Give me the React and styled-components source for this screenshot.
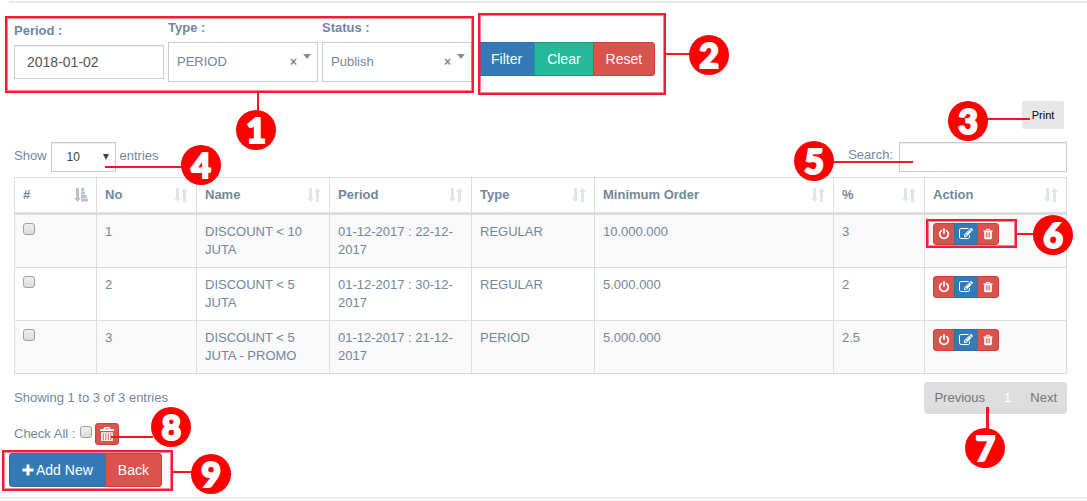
import React from "react";
import styled, { createGlobalStyle, css } from "styled-components";

const GlobalStyle = createGlobalStyle`
  *, *::before, *::after { box-sizing: border-box; }
  body {
    margin: 0;
    background: #f7f7f7;
    color: #73879c;
    font: 13px/18px "Liberation Sans", Arial, sans-serif;
  }
  button, input, select { font-family: inherit; margin: 0; }
`;

const palette = {
  blue: ["#337ab7", "#2e6da4"],
  green: ["#26b99a", "#169f85"],
  red: ["#d9534f", "#d43f3a"],
};

/* Page */
const Panel = styled.main`
  background: #fff;
  border-bottom: 1px solid #e4e4e4;
  padding: 1px 20px 10px 14px;
`;
const Rule = styled.hr`
  height: 2px;
  margin: 0 -20px 16px -5px;
  border: 0;
  background: #e6e9ed;
`;
const Bar = styled.div`
  display: flex;
  align-items: ${(p) => p.$align || "center"};
  justify-content: ${(p) => p.$justify || "flex-start"};
  gap: ${(p) => p.$gap || 0}px;
  margin-top: ${(p) => p.$top || 0}px;
`;
const Anchor = styled.div`
  position: relative;
  display: flex;
  align-items: center;
`;
const PrintBar = styled(Bar)`
  padding-right: 3px;
`;

/* Numbered callouts drawn over the page */
const over = css`
  position: absolute;
  z-index: 2;
  pointer-events: none;
  left: ${(p) => p.$x}px;
  top: ${(p) => p.$y}px;
`;
const Frame = styled.span`
  ${over}
  z-index: 1;
  width: ${(p) => p.$w}px;
  height: ${(p) => p.$h}px;
  border: 2px solid #f81838;
  box-shadow: inset 0 0 0 1px #f8183888;
`;
const Lead = styled.span`
  ${over}
  width: ${(p) => p.$w || 2}px;
  height: ${(p) => p.$h || 2}px;
  background: #fb1420;
`;
const Badge = styled.span`
  ${over}
  display: flex;
  align-items: center;
  justify-content: center;
  width: 40px;
  height: 40px;
  border-radius: 50%;
  background: #f00;
  color: #fff;
  font: 900 34px/40px Lato, "Liberation Sans", sans-serif;
  -webkit-text-stroke: 2px #fff;
`;

/* Filters */
const Filters = styled(Anchor)`
  gap: 4px;
`;
const Field = styled.div`
  display: flex;
  flex-direction: column;
  gap: 5px;
  width: 150px;
`;
const FieldLabel = styled.label`
  font-weight: 700;
`;
const TextInput = styled.input`
  width: 100%;
  height: 34px;
  padding: 6px 12px;
  border: 1px solid #ccc;
  border-radius: 0;
  background: #fff;
  box-shadow: inset 0 1px 1px rgba(0, 0, 0, 0.075);
  color: #555;
  font-size: 14px;
`;
const Picker = styled.div`
  position: relative;
`;
const PickerSelect = styled.select`
  appearance: none;
  width: 100%;
  height: 40px;
  padding: 0 40px 2px 8px;
  border: 1px solid #ccc;
  border-radius: 0;
  background: #fff;
  color: #73879c;
  font-size: 13px;
`;
const ClearPick = styled.button`
  position: absolute;
  right: 21px;
  top: 11px;
  padding: 0;
  border: 0;
  background: none;
  color: #73879c;
  font-size: 12px;
  font-weight: 700;
  line-height: 18px;
`;
const PickerCaret = styled.span`
  position: absolute;
  right: 7px;
  top: 12px;
  border: 4px solid transparent;
  border-top: 5px solid #888;
  border-bottom: 0;
  pointer-events: none;
`;

/* Buttons */
const ButtonGroup = styled(Anchor)`
  margin-top: ${(p) => p.$top || 0}px;
  margin-left: ${(p) => p.$left || 0}px;
  > button { border-radius: 0; }
  > button:first-of-type { border-radius: 3px 0 0 3px; }
  > button:last-of-type { border-radius: 0 3px 3px 0; }
  > button + button { margin-left: -1px; }
`;
const Button = styled.button`
  display: inline-flex;
  align-items: center;
  gap: 2px;
  height: 34px;
  padding: 0 12px;
  border: 1px solid ${(p) => palette[p.$tone][1]};
  border-radius: 3px;
  background: ${(p) => palette[p.$tone][0]};
  color: #fff;
  font-size: 14px;
  white-space: nowrap;
`;
const SmallButton = styled(Button)`
  justify-content: center;
  height: 22px;
  padding: 0 4px;
  min-width: 22px;
`;
const PrintButton = styled.button`
  width: 42px;
  height: 28px;
  padding: 0;
  border: 0;
  border-radius: 2px;
  background: #e7e7e7;
  color: #000;
  font-size: 11px;
`;

/* Table tools */
const LengthLabel = styled.label`
  display: flex;
  align-items: center;
  gap: 4px;
  height: 30px;
  padding-bottom: 2px;
`;
const LengthPicker = styled.span`
  position: relative;
  display: flex;
  height: 30px;
  margin-bottom: -2px;
`;
const LengthSelect = styled.select`
  appearance: none;
  width: 65px;
  height: 30px;
  padding: 0 15px;
  border: 1px solid #ccc;
  border-radius: 0;
  background: #fff;
  box-shadow: inset 0 1px 1px rgba(0, 0, 0, 0.075);
  color: #444;
  font-size: 12px;
`;
const LengthCaret = styled.span`
  position: absolute;
  right: 7px;
  top: 12px;
  border: 3px solid transparent;
  border-top: 6px solid #444;
  border-bottom: 0;
  pointer-events: none;
`;
const SearchLabel = styled.label`
  padding: 0 6px 4px 0;
`;
const SearchInput = styled(TextInput)`
  width: 168px;
  height: 30px;
  padding: 5px 10px;
`;

/* Table */
const Table = styled.table`
  width: 100%;
  margin-top: 5px;
  table-layout: fixed;
  border: solid #ddd;
  border-width: 1px 0 0 1px;
  border-collapse: separate;
  border-spacing: 0;
`;
const Col = styled.col`
  width: ${(p) => (p.$w ? `${p.$w}px` : "auto")};
`;
const Th = styled.th`
  padding: 8px;
  border: solid #ddd;
  border-width: 0 1px 3px 0;
  text-align: left;
`;
const HeadCell = styled.span`
  display: flex;
  align-items: center;
  justify-content: space-between;
  white-space: nowrap;
  color: ${(p) => (p.$active ? "#b9c3ce" : "#e1e5ea")};
`;
const HeadText = styled.span`
  color: #73879c;
`;
const Row = styled.tr`
  background: #fff;
  &:nth-child(odd) { background: #f9f9f9; }
`;
const Td = styled.td`
  padding: 8px;
  border: solid #ddd;
  border-width: 0 1px 1px 0;
  vertical-align: top;
`;
const RowActions = styled(ButtonGroup)`
  width: max-content;
`;
const Check = styled.input`
  appearance: none;
  display: block;
  width: 12px;
  height: 12px;
  border: 1px solid #a0a0a0;
  border-radius: 3px;
  background: linear-gradient(#efefef, #dcdcdc);
  &:checked { background: #337ab7; }
`;

/* Pagination and bulk actions */
const Info = styled.p`
  margin: 0;
`;
const Pages = styled.nav`
  position: relative;
  display: flex;
  align-items: center;
  gap: 19px;
  height: 32px;
  padding: 0 10px;
  border-radius: 4px;
  background: #ddd;
`;
const PageLink = styled.a`
  color: ${(p) => (p.$current ? "#fff" : "#777")};
  text-decoration: none;
`;
const BulkLabel = styled.label`
  display: flex;
  align-items: center;
  gap: 5px;
`;
const BulkCheck = styled(Check)`
  margin-bottom: 4px;
`;

/* Icons */
const Icon = ({ size = 12, box = 1792, d }) => (
  <svg width={size} height={size} viewBox={`0 0 ${box} ${box}`} fill="currentColor" aria-hidden="true">
    <path d={d} fillRule="evenodd" />
  </svg>
);
const paths = {
  power:
    "M1664 896q0 156-61 298t-164 245-245 164-298 61-298-61-245-164-164-245-61-298q0-182 80.5-343t226.5-270q43-32 95.5-25t83.5 50q32 42 24.5 94.5t-49.5 84.5q-98 74-151.5 181t-53.5 228q0 104 40.5 198.5t109.5 163.5 163.5 109.5 198.5 40.5 198.5-40.5 163.5-109.5 109.5-163.5 40.5-198.5q0-121-53.5-228t-151.5-181q-42-32-49.5-84.5t24.5-94.5q31-43 84-50t95 25q146 109 226.5 270t80.5 343zm-640-768v640q0 52-38 90t-90 38-90-38-38-90v-640q0-52 38-90t90-38 90 38 38 90z",
  edit:
    "M888 1184l116-116-152-152-116 116v56h96v96h56zm440-720q-16-16-33 1l-350 350q-17 17-1 33t33-1l350-350q17-17 1-33zm80 594v190q0 119-84.5 203.5t-203.5 84.5h-832q-119 0-203.5-84.5t-84.5-203.5v-832q0-119 84.5-203.5t203.5-84.5h832q63 0 117 25 15 7 18 23 3 17-9 29l-49 49q-14 14-32 8-23-6-45-6h-832q-66 0-113 47t-47 113v832q0 66 47 113t113 47h832q66 0 113-47t47-113v-126q0-13 9-22l64-64q15-15 35-7t20 29zm-96-738l288 288-672 672h-288v-288zm444 132l-92 92-288-288 92-92q28-28 68-28t68 28l152 152q28 28 28 68t-28 68z",
  trash:
    "M704 1376v-704q0-14-9-23t-23-9h-64q-14 0-23 9t-9 23v704q0 14 9 23t23 9h64q14 0 23-9t9-23zm256 0v-704q0-14-9-23t-23-9h-64q-14 0-23 9t-9 23v704q0 14 9 23t23 9h64q14 0 23-9t9-23zm256 0v-704q0-14-9-23t-23-9h-64q-14 0-23 9t-9 23v704q0 14 9 23t23 9h64q14 0 23-9t9-23zm-544-992h448l-48-117q-7-9-17-11h-317q-10 2-17 11zm928 32v64q0 14-9 23t-23 9h-96v948q0 83-47 143.5t-113 60.5h-832q-66 0-113-58.5t-47-141.5v-952h-96q-14 0-23-9t-9-23v-64q0-14 9-23t23-9h309l70-167q15-37 54-63t79-26h320q40 0 79 26t54 63l70 167h309q14 0 23 9t9 23z",
  bin: "M4 0h4l1 1v1h3v1.500H0V2h3V1zM4.200 1.200V2h3.600v-.8zM1 4.400h10V12l-1 1H2l-1-1zM2.400 5.400v6.200h.8V5.400zM4.600 5.400v6.200h.8V5.400zM6.700 5.400v6.200h.8V5.400zM8.900 5.400v6.200h.8V5.400z",
  plus: "M4.500 0.500h3v4h4v3h-4v4h-3v-4h-4v-3h4z",
  sort: "M2 0h3v10h2l-3.500 4L0 10h2zM9 14h3V4h2L10.500 0 7 4h2z",
  sorted: "M2 0h3v10h2l-3.500 4L0 10h2zM7 0h3v3H7zM7 3.500h4v3H7zM7 7h5.500v3H7zM7 10.500h7V13.600H7z",
};

const columns = [
  ["#", 82],
  ["No", 100],
  ["Name", 133],
  ["Period", 142],
  ["Type", 123],
  ["Minimum Order", 0],
  ["%", 91],
  ["Action", 142],
];
const rows = [
  ["1", "DISCOUNT < 10 JUTA", "01-12-2017 : 22-12-2017", "REGULAR", "10.000.000", "3"],
  ["2", "DISCOUNT < 5 JUTA", "01-12-2017 : 30-12-2017", "REGULAR", "5.000.000", "2"],
  ["3", "DISCOUNT < 5 JUTA - PROMO", "01-12-2017 : 21-12-2017", "PERIOD", "5.000.000", "2.5"],
];

const SelectField = ({ id, label, options }) => (
  <Field>
    <FieldLabel htmlFor={id}>{label}</FieldLabel>
    <Picker>
      <PickerSelect id={id}>
        {options.map((o) => (
          <option key={o}>{o}</option>
        ))}
      </PickerSelect>
      <ClearPick type="button" aria-label={`Clear ${id}`}>×</ClearPick>
      <PickerCaret />
    </Picker>
  </Field>
);

export default function App() {
  return (
    <>
      <GlobalStyle />
      <Panel>
        <Rule />
        <Bar $align="flex-start" $gap={6}>
          <Filters>
            <Field>
              <FieldLabel htmlFor="period">Period :</FieldLabel>
              <TextInput id="period" defaultValue="2018-01-02" />
            </Field>
            <SelectField id="type" label="Type :" options={["PERIOD", "REGULAR"]} />
            <SelectField id="status" label="Status :" options={["Publish", "Draft"]} />
            <Frame $x={-9} $y={-3} $w={469} $h={77} />
            <Lead $x={243} $y={74} $h={20} />
            <Badge $x={222} $y={91}>1</Badge>
          </Filters>
          <ButtonGroup $top={23}>
            <Button type="button" $tone="blue">Filter</Button>
            <Button type="button" $tone="green">Clear</Button>
            <Button type="button" $tone="red">Reset</Button>
            <Frame $x={0} $y={-29} $w={188} $h={82} />
            <Lead $x={186} $y={11} $w={28} />
            <Badge $x={211} $y={-7}>2</Badge>
          </ButtonGroup>
        </Bar>

        <PrintBar $top={19} $justify="flex-end">
          <Anchor>
            <PrintButton type="button">Print</PrintButton>
            <Lead $x={-35} $y={17} $w={43} />
            <Badge $x={-74} $y={0}>3</Badge>
          </Anchor>
        </PrintBar>

        <Bar $top={13} $justify="space-between">
          <Anchor>
            <LengthLabel>
              Show
              <LengthPicker>
                <LengthSelect defaultValue="10">
                  <option>10</option>
                  <option>25</option>
                  <option>50</option>
                </LengthSelect>
                <LengthCaret />
              </LengthPicker>
              entries
            </LengthLabel>
            <Lead $x={91} $y={24} $w={78} />
            <Badge $x={167} $y={3}>4</Badge>
          </Anchor>
          <Bar>
            <SearchLabel htmlFor="search">Search:</SearchLabel>
            <Anchor>
              <SearchInput id="search" type="search" />
              <Lead $x={-67} $y={19} $w={81} />
              <Badge $x={-105} $y={-1}>5</Badge>
            </Anchor>
          </Bar>
        </Bar>

        <Table>
          <colgroup>
            {columns.map(([name, w]) => (
              <Col key={name} $w={w} />
            ))}
          </colgroup>
          <thead>
            <tr>
              {columns.map(([name], i) => (
                <Th key={name} scope="col">
                  <HeadCell $active={i === 0}>
                    <HeadText>{name}</HeadText>
                    <Icon size={14} box={14} d={i === 0 ? paths.sorted : paths.sort} />
                  </HeadCell>
                </Th>
              ))}
            </tr>
          </thead>
          <tbody>
            {rows.map((cells, i) => (
              <Row key={cells[0]}>
                <Td>
                  <Check type="checkbox" aria-label={`Select row ${cells[0]}`} />
                </Td>
                {cells.map((c, j) => (
                  <Td key={j}>{c}</Td>
                ))}
                <Td>
                  <RowActions>
                    <SmallButton type="button" $tone="red" aria-label="Toggle">
                      <Icon d={paths.power} />
                    </SmallButton>
                    <SmallButton type="button" $tone="blue" aria-label="Edit">
                      <Icon size={14} d={paths.edit} />
                    </SmallButton>
                    <SmallButton type="button" $tone="red" aria-label="Delete">
                      <Icon d={paths.trash} />
                    </SmallButton>
                    {i === 0 && (
                      <>
                        <Frame $x={-7} $y={-4} $w={91} $h={29} />
                        <Lead $x={82} $y={10} $w={20} />
                        <Badge $x={100} $y={-8}>6</Badge>
                      </>
                    )}
                  </RowActions>
                </Td>
              </Row>
            ))}
          </tbody>
        </Table>

        <Bar $top={8} $justify="space-between">
          <Info>Showing 1 to 3 of 3 entries</Info>
          <Pages aria-label="Pagination">
            <PageLink href="#previous">Previous</PageLink>
            <PageLink href="#1" $current>1</PageLink>
            <PageLink href="#next">Next</PageLink>
            <Lead $x={62} $y={25} $w={3} $h={24} />
            <Badge $x={41} $y={46}>7</Badge>
          </Pages>
        </Bar>

        <Bar $top={9} $gap={3}>
          <BulkLabel>
            Check All :
            <BulkCheck type="checkbox" />
          </BulkLabel>
          <Anchor>
            <SmallButton type="button" $tone="red" aria-label="Delete checked">
              <Icon size={14} box={12} d={paths.bin} />
            </SmallButton>
            <Lead $x={16} $y={13} $w={42} />
            <Badge $x={56} $y={-16}>8</Badge>
          </Anchor>
        </Bar>

        <Bar $top={8}>
          <ButtonGroup $left={-5}>
            <Button type="button" $tone="blue">
              <Icon box={12} d={paths.plus} />
              Add New
            </Button>
            <Button type="button" $tone="red">Back</Button>
            <Frame $x={-7} $y={-3} $w={171} $h={41} />
            <Lead $x={163} $y={18} $w={22} />
            <Badge $x={182} $y={1}>9</Badge>
          </ButtonGroup>
        </Bar>
      </Panel>
    </>
  );
}
